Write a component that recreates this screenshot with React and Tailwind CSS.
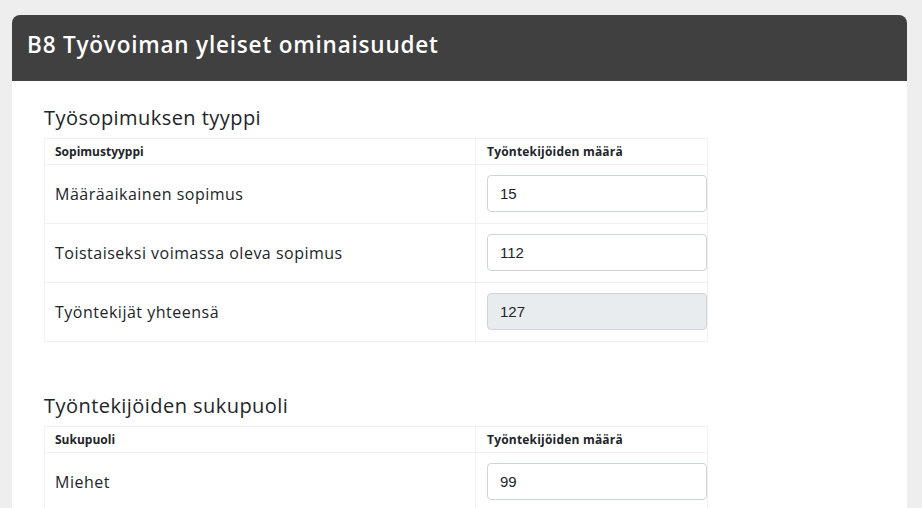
const SECTIONS = [
  {
    title: 'Työsopimuksen tyyppi',
    col: 'Sopimustyyppi',
    rows: [
      { label: 'Määräaikainen sopimus', value: '15' },
      { label: 'Toistaiseksi voimassa oleva sopimus', value: '112' },
      { label: 'Työntekijät yhteensä', value: '127', disabled: true },
    ],
  },
  {
    title: 'Työntekijöiden sukupuoli',
    col: 'Sukupuoli',
    rows: [{ label: 'Miehet', value: '99' }],
  },
];

export default function App() {
  return (
    <div
      className="bg-[#eeeeee] px-3 pt-[15px] overflow-hidden h-[508px]"
      style={{ fontFamily: '"Open Sans", "Liberation Sans", sans-serif' }}
    >
      <div className="w-[895px] bg-white rounded-t-lg">
        <div className="h-[66px] bg-[#404040] rounded-t-lg flex items-center px-[15px] pb-[6px]">
          <h1 className="text-white text-[22.5px] font-semibold tracking-[0.8px]">
            B8 Työvoiman yleiset ominaisuudet
          </h1>
        </div>
        <div className="px-8 pt-[25px] flex flex-col gap-[52px]">
          {SECTIONS.map((s) => (
            <Section key={s.title} {...s} />
          ))}
        </div>
      </div>
    </div>
  );
}

function Section({ title, col, rows }) {
  return (
    <div>
      <h2 className="text-[20px] leading-6 tracking-[0.45px] text-[#212529] mb-2">{title}</h2>
      <table className="w-[664px] table-fixed border-collapse border border-[#f0f0f0] text-[#212529]">
        <thead>
          <tr className="h-[26px]">
            <th className="w-[431px] text-left text-[12px] font-bold px-[10px] border border-[#f0f0f0]">
              {col}
            </th>
            <th className="text-left text-[12px] font-bold tracking-[0.2px] px-[11px] border border-[#f0f0f0]">
              Työntekijöiden määrä
            </th>
          </tr>
        </thead>
        <tbody>
          {rows.map((r) => (
            <tr key={r.label} className="h-[59px]">
              <td className="px-[10px] text-[16px] tracking-[0.5px] border border-[#f0f0f0]">
                {r.label}
              </td>
              <td className="pl-[11px] pr-[2px] pb-[2px] border border-[#f0f0f0]">
                <input
                  readOnly
                  value={r.value}
                  className={`block w-[220px] h-[37px] rounded border border-[#ced4da] px-3 text-[15px] text-[#212529] outline-none ${
                    r.disabled ? 'bg-[#e9ecef]' : 'bg-white'
                  }`}
                  style={{ fontFamily: '"Liberation Sans", Arial, sans-serif' }}
                />
              </td>
            </tr>
          ))}
        </tbody>
      </table>
    </div>
  );
}
